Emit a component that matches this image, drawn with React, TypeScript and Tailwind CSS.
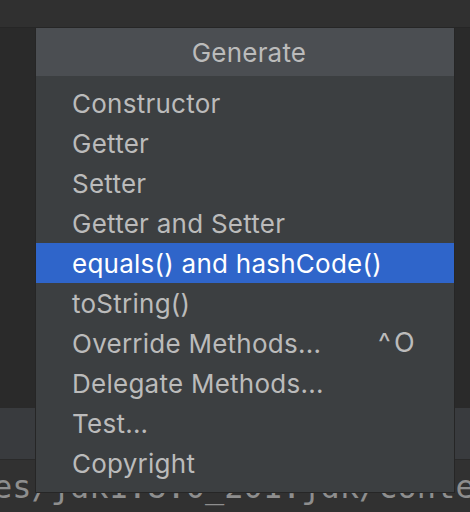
import React from 'react';

// --- Generate popup over an editor backdrop ---

interface MenuItem {
  label: string;
  shortcut?: string;
  selected?: boolean;
}

const items: MenuItem[] = [
  { label: 'Constructor' },
  { label: 'Getter' },
  { label: 'Setter' },
  { label: 'Getter and Setter' },
  { label: 'equals() and hashCode()', selected: true },
  { label: 'toString()' },
  { label: 'Override Methods...', shortcut: '^O' },
  { label: 'Delegate Methods...' },
  { label: 'Test...' },
  { label: 'Copyright' },
];

function GenerateMenu() {
  return (
    <div className="absolute left-[36px] top-[28px] flex w-[418px] flex-col bg-[#3c3f41] pb-[9px] shadow-[0_0_0_1px_#262626]">
      <div className="flex h-[48px] items-center justify-center bg-[#4b4e52] pl-[8px] text-[26px] tracking-[0.2px] text-[#bbbbbb]">
        Generate
      </div>
      <div className="flex flex-col pt-[7px]">
        {items.map((item) => (
          <div
            key={item.label}
            className={`flex h-[40px] items-center pl-[36px] pr-[39px] text-[26px] tracking-[0.25px] ${
              item.selected ? 'bg-[#2f65ca] text-white' : 'text-[#bbbbbb]'
            }`}
          >
            <span>{item.label}</span>
            {item.shortcut && (
              <span className="ml-auto text-[27px]">
                <span className="mr-[3px]">^</span>O
              </span>
            )}
          </div>
        ))}
      </div>
    </div>
  );
}

export default function App() {
  return (
    <div
      className="relative flex h-[512px] w-[470px] flex-col overflow-hidden bg-[#2b2b2b]"
      style={{ fontFamily: 'Inter, "Noto Sans", sans-serif' }}
    >
      <div className="h-[28px] shrink-0 border-b border-[#262626] bg-[#303030]" />
      <div className="h-[379px] shrink-0 bg-[#2a2a2a]" />
      <div className="h-[53px] shrink-0 border-y border-[#2a2a2a] bg-[#393b3e]" />
      <div className="flex-1 overflow-hidden bg-[#313131]">
        <div
          className="-ml-[7px] mt-[7px] whitespace-nowrap text-[32px] leading-[40px] text-[#8e8e8e]"
          style={{ fontFamily: '"DejaVu Sans Mono", monospace' }}
        >
          es/jdk1.8.0_201.jdk/contents/Home
        </div>
      </div>
      <GenerateMenu />
    </div>
  );
}
